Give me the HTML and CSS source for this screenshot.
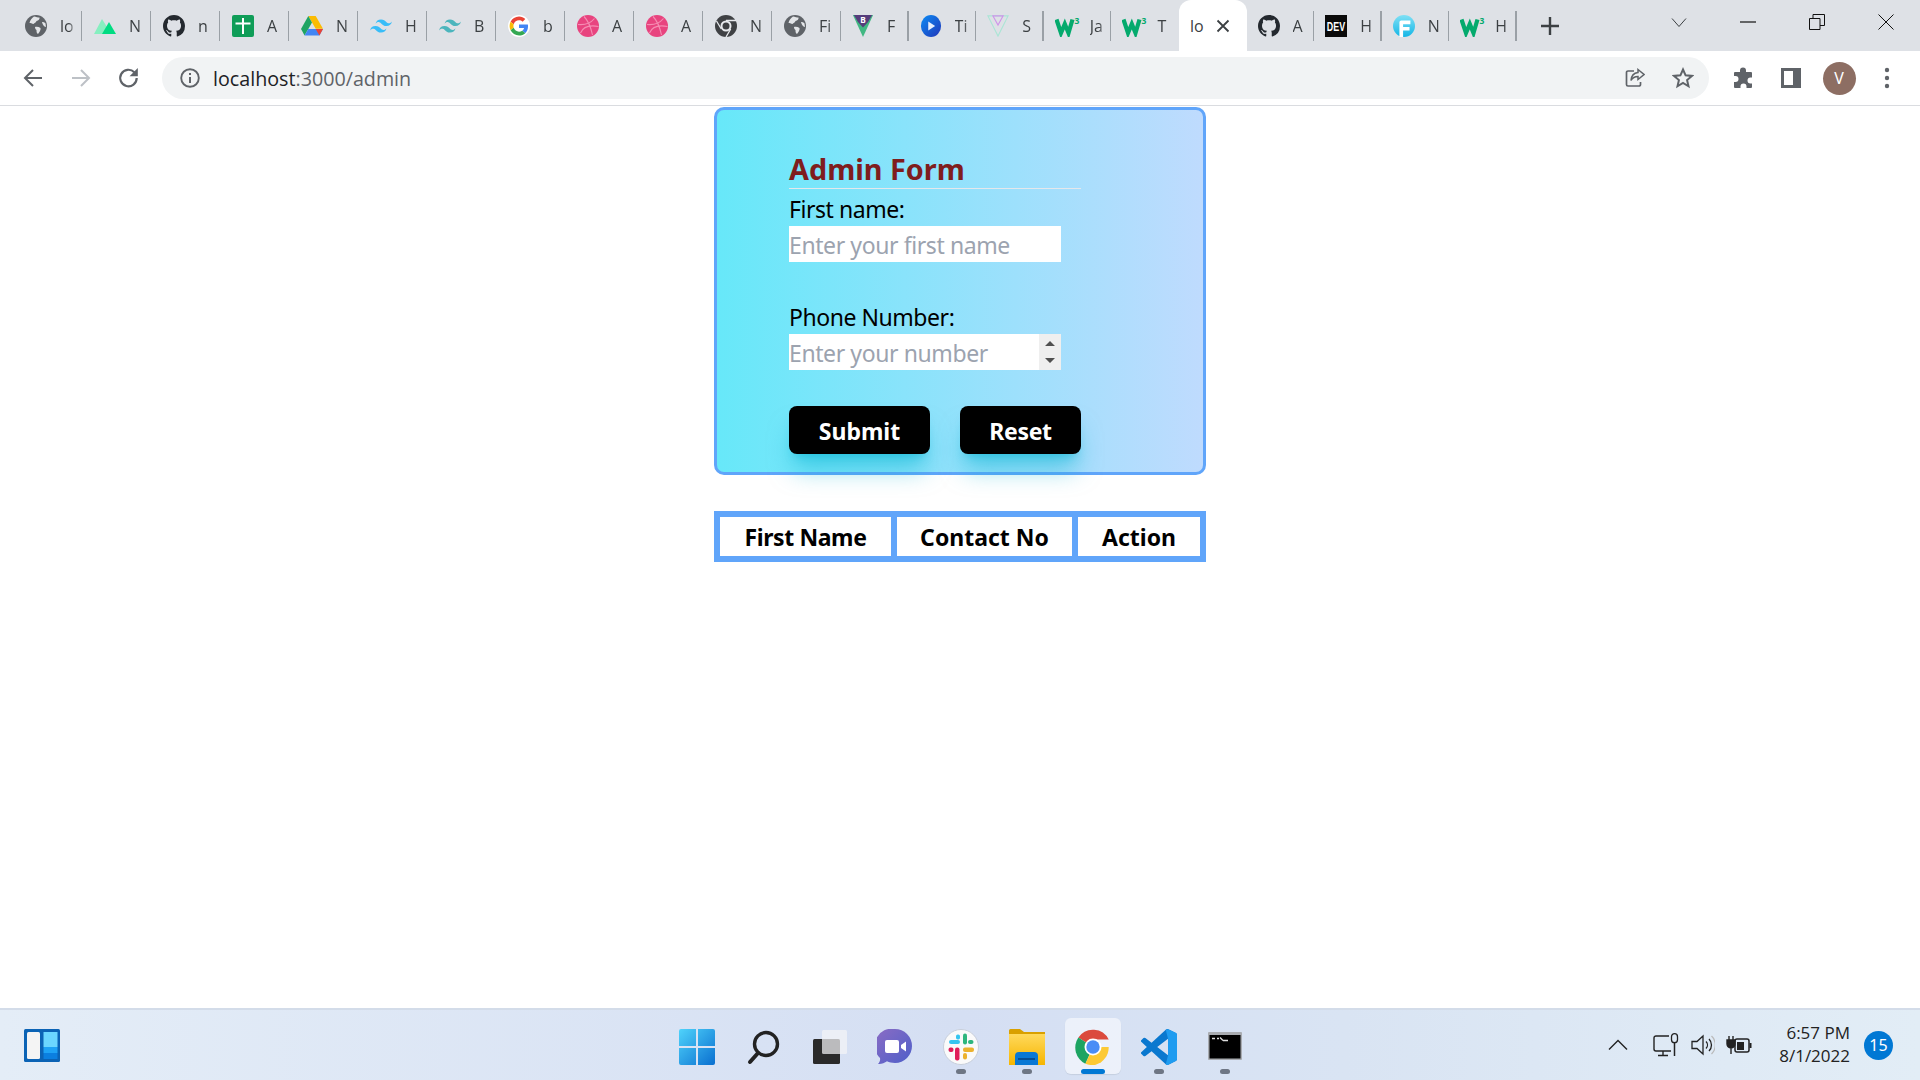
FILE: index.html
```html
<!DOCTYPE html>
<html lang="en">
<head>
<meta charset="utf-8">
<title>Admin Form</title>
<link rel="stylesheet" href="styles.css">
</head>
<body>
<svg class="defs" aria-hidden="true">
  <defs>
    <linearGradient id="gWin" x1="0" y1="0" x2="1" y2="1"><stop offset="0" stop-color="#4fd3fb"/><stop offset="1" stop-color="#0a6fd0"/></linearGradient>
    <linearGradient id="gFolder" x1="0" y1="0" x2="0" y2="1"><stop offset="0" stop-color="#ffd95c"/><stop offset="1" stop-color="#f6b500"/></linearGradient>
    <linearGradient id="gChat" x1="0" y1="0" x2="1" y2="1"><stop offset="0" stop-color="#8b6cc4"/><stop offset="1" stop-color="#4e5fc9"/></linearGradient>
    <linearGradient id="gF" x1="0" y1="0" x2="0" y2="1"><stop offset="0" stop-color="#7fe0f5"/><stop offset="1" stop-color="#14b6e6"/></linearGradient>
    <linearGradient id="gPlay" x1="0" y1="0" x2="1" y2="1"><stop offset="0" stop-color="#0b8cf5"/><stop offset="1" stop-color="#2236b8"/></linearGradient>
    <symbol id="globe" viewBox="0 0 22 22"><circle cx="11" cy="11" r="11" fill="#5f6368"/><path d="M9 1.500c2 .5 4 1 5.500 1 .5 1.500-1 3-3 3.500-.5 1.500-2 2-3 3-1.500-.5-3-1-4-1C5 5 7 3 9 1.500zM10 12c2-.5 4 0 5.500 1 .5 2-1 4-2.500 6-1.500-1-1.500-2.500-1.500-4-1-.5-1.500-1.800-1.500-3zM17 7c1.500 0 3 .5 3.500 1.500l.5 3.500c-2 0-3.500-3-4-5z" fill="#e3e5e8"/></symbol>
    <symbol id="nuxt" viewBox="0 0 22 22"><path d="M0 19 8 4l5 8-4 7z" fill="#86efc0"/><path d="M8 19 15 7l7 12z" fill="#00dc82"/></symbol>
    <symbol id="github" viewBox="0 0 16 16"><path fill="#24292f" d="M8 0C3.580 0 0 3.580 0 8c0 3.540 2.290 6.530 5.470 7.590.4.070.55-.17.55-.38 0-.19-.01-.82-.01-1.490-2.010.37-2.530-.49-2.690-.94-.09-.23-.48-.94-.82-1.130-.28-.15-.68-.52-.01-.53.63-.01 1.080.58 1.230.82.72 1.210 1.870.87 2.330.66.07-.52.28-.87.51-1.070-1.780-.2-3.640-.89-3.640-3.950 0-.87.31-1.590.82-2.150-.08-.2-.36-1.020.08-2.120 0 0 .67-.21 2.200.82.64-.18 1.320-.27 2-.27.68 0 1.360.09 2 .27 1.530-1.040 2.200-.82 2.200-.82.44 1.100.16 1.920.08 2.120.51.56.82 1.270.82 2.150 0 3.070-1.870 3.750-3.650 3.950.29.25.54.73.54 1.480 0 1.070-.01 1.930-.01 2.200 0 .21.15.46.55.38A8.013 8.013 0 0016 8c0-4.420-3.580-8-8-8z"/></symbol>
    <symbol id="sheets" viewBox="0 0 22 22"><rect width="22" height="22" rx="2" fill="#0f9d58"/><path d="M3.500 7.500h6.500V3h2v4.500h6.500v2H12V19h-2V9.500H3.500z" fill="#fff"/></symbol>
    <symbol id="drive" viewBox="0 0 22 20"><path d="M7.300 0h7.400l7.300 12.800h-7.300z" fill="#fbbc04"/><path d="M7.300 0 0 13l3.600 6.500 7.400-13z" fill="#1fa463"/><path d="M7.300 13H22l-3.600 6.500H3.600z" fill="#4285f4"/><path d="M14.700 13H22l-3.600 6.500z" fill="#ea4335"/></symbol>
    <symbol id="tw" viewBox="2 5 20 14"><path fill="#38bdf8" d="M12 6c-2.670 0-4.330 1.330-5 4 1-1.330 2.170-1.830 3.500-1.500.76.19 1.310.74 1.910 1.350.98 1 2.090 2.150 4.590 2.150 2.670 0 4.330-1.330 5-4-1 1.330-2.170 1.830-3.500 1.500-.76-.19-1.310-.74-1.910-1.350C15.610 7.150 14.500 6 12 6zM7 12c-2.670 0-4.330 1.330-5 4 1-1.330 2.170-1.830 3.500-1.500.76.19 1.310.74 1.910 1.350C8.390 16.850 9.500 18 12 18c2.670 0 4.330-1.330 5-4-1 1.330-2.170 1.830-3.500 1.500-.76-.19-1.310-.74-1.910-1.350C10.610 13.150 9.500 12 7 12z"/></symbol>
    <symbol id="tw2" viewBox="2 5 20 14"><path fill="#4bb5bd" d="M12 6c-2.670 0-4.330 1.330-5 4 1-1.330 2.170-1.830 3.500-1.500.76.19 1.310.74 1.910 1.350.98 1 2.090 2.150 4.590 2.150 2.670 0 4.330-1.330 5-4-1 1.330-2.170 1.830-3.500 1.500-.76-.19-1.310-.74-1.910-1.350C15.610 7.150 14.500 6 12 6zM7 12c-2.670 0-4.330 1.330-5 4 1-1.330 2.170-1.830 3.500-1.500.76.19 1.310.74 1.910 1.350C8.390 16.850 9.500 18 12 18c2.670 0 4.330-1.330 5-4-1 1.330-2.170 1.830-3.500 1.500-.76-.19-1.310-.74-1.910-1.350C10.610 13.150 9.500 12 7 12z"/></symbol>
    <symbol id="google" viewBox="-4 -4 56 56"><circle cx="24" cy="24" r="28" fill="#fff"/><path fill="#EA4335" d="M24 9.500c3.540 0 6.710 1.220 9.210 3.600l6.850-6.850C35.900 2.380 30.470 0 24 0 14.620 0 6.510 5.380 2.560 13.220l7.980 6.190C12.430 13.720 17.740 9.500 24 9.500z"/><path fill="#4285F4" d="M46.980 24.550c0-1.570-.15-3.090-.38-4.550H24v9.020h12.940c-.58 2.960-2.260 5.480-4.780 7.180l7.730 6c4.510-4.180 7.090-10.360 7.090-17.650z"/><path fill="#FBBC05" d="M10.530 28.590c-.48-1.450-.76-2.990-.76-4.590s.27-3.140.76-4.590l-7.980-6.190C.92 16.460 0 20.120 0 24c0 3.880.92 7.540 2.560 10.780l7.970-6.190z"/><path fill="#34A853" d="M24 48c6.480 0 11.930-2.130 15.890-5.810l-7.730-6c-2.150 1.450-4.920 2.300-8.160 2.300-6.260 0-11.570-4.220-13.470-9.910l-7.980 6.190C6.510 42.620 14.620 48 24 48z"/></symbol>
    <symbol id="dribbble" viewBox="0 0 22 22"><circle cx="11" cy="11" r="11" fill="#e8447f"/><path d="M7 1.500c3 3 6.500 9 8.500 18.500M1 9.500c5 .5 12-.5 16.500-6M3.500 18c2-5 7-8.500 18-6.500" fill="none" stroke="#f58db3" stroke-width="1.100"/></symbol>
    <symbol id="crdark" viewBox="0 0 22 22"><circle cx="11" cy="11" r="11" fill="#3f4144"/><circle cx="11" cy="11" r="5.500" fill="#e8eaed"/><circle cx="11" cy="11" r="3.500" fill="#3f4144"/><path d="M11 5.500h10M6.300 14 1.500 6M15.700 14 11 22" stroke="#e8eaed" stroke-width="1.300" fill="none"/></symbol>
    <symbol id="bvue" viewBox="0 0 22 24"><path d="M0 0h22L11 24z" fill="#41b883"/><path d="M4.500 0h13L11 12z" fill="#dde0e6"/><path d="M1 0h20l-4.500 7.500-5.500 6-5.500-6z" fill="#563d7c"/><text x="11" y="9" class="svg-b">B</text></symbol>
    <symbol id="play" viewBox="0 0 22 24"><ellipse cx="11" cy="12" rx="11" ry="12" fill="url(#gPlay)"/><path d="M8 7l7.500 5L8 17z" fill="#e6eefc"/></symbol>
    <symbol id="ghost" viewBox="0 0 24 24"><path d="M1 1h22L12 23z" fill="none" stroke="#aae5d5" stroke-width="1.200"/><path d="M6.500 1h11L12 11z" fill="none" stroke="#cf94ea" stroke-width="1.300"/></symbol>
    <symbol id="w3" viewBox="0 0 25 18"><path d="M1.500 2.500 6 16l3.800-9 3.700 9 4-13.500" fill="none" stroke="#04aa6d" stroke-width="4.200"/><text x="19.500" y="7" class="svg-3">3</text></symbol>
    <symbol id="dev" viewBox="0 0 24 24"><rect width="24" height="24" fill="#0a0a0a"/><text x="12" y="17" class="svg-dev" textLength="20" lengthAdjust="spacingAndGlyphs">DEV</text></symbol>
    <symbol id="fcirc" viewBox="0 0 24 24"><circle cx="12" cy="12" r="12" fill="url(#gF)"/><path d="M7 24V8a2 2 0 0 1 2-2h10v4h-8v3h7v4h-7v7z" fill="#fff"/></symbol>
  </defs>
</svg>

<header class="tabstrip">
  <div class="tab"><svg class="fav"><use href="#globe"/></svg><span class="tab-t">lo</span></div>
  <div class="tab"><svg class="fav"><use href="#nuxt"/></svg><span class="tab-t">N</span></div>
  <div class="tab"><svg class="fav"><use href="#github"/></svg><span class="tab-t">n</span></div>
  <div class="tab"><svg class="fav"><use href="#sheets"/></svg><span class="tab-t">A</span></div>
  <div class="tab"><svg class="fav"><use href="#drive"/></svg><span class="tab-t">N</span></div>
  <div class="tab"><svg class="fav"><use href="#tw"/></svg><span class="tab-t">H</span></div>
  <div class="tab"><svg class="fav"><use href="#tw2"/></svg><span class="tab-t">B</span></div>
  <div class="tab"><svg class="fav"><use href="#google"/></svg><span class="tab-t">b</span></div>
  <div class="tab"><svg class="fav"><use href="#dribbble"/></svg><span class="tab-t">A</span></div>
  <div class="tab"><svg class="fav"><use href="#dribbble"/></svg><span class="tab-t">A</span></div>
  <div class="tab"><svg class="fav"><use href="#crdark"/></svg><span class="tab-t">N</span></div>
  <div class="tab"><svg class="fav"><use href="#globe"/></svg><span class="tab-t">Fi</span></div>
  <div class="tab tab-n"><svg class="fav"><use href="#bvue"/></svg><span class="tab-t">F</span></div>
  <div class="tab tab-n"><svg class="fav"><use href="#play"/></svg><span class="tab-t">Ti</span></div>
  <div class="tab tab-n"><svg class="fav"><use href="#ghost"/></svg><span class="tab-t">S</span></div>
  <div class="tab tab-n"><svg class="fav fav-w3"><use href="#w3"/></svg><span class="tab-t tab-t-w3">Ja</span></div>
  <div class="tab tab-n tab-nosep"><svg class="fav fav-w3"><use href="#w3"/></svg><span class="tab-t tab-t-w3">T</span></div>
  <div class="tab tab-n tab-active"><span class="tab-t tab-t-active">lo</span><svg class="tab-x" viewBox="0 0 14 14"><path d="M1.500 1.500l11 11M12.500 1.500l-11 11" stroke="#3c4043" stroke-width="1.800"/></svg></div>
  <div class="tab tab-n"><svg class="fav"><use href="#github"/></svg><span class="tab-t">A</span></div>
  <div class="tab tab-n"><svg class="fav"><use href="#dev"/></svg><span class="tab-t">H</span></div>
  <div class="tab tab-n"><svg class="fav"><use href="#fcirc"/></svg><span class="tab-t">N</span></div>
  <div class="tab tab-n"><svg class="fav fav-w3"><use href="#w3"/></svg><span class="tab-t tab-t-w3">H</span></div>
  <svg class="plus" viewBox="0 0 18 18"><path d="M9 0v18M0 9h18" stroke="#3c4043" stroke-width="2.400"/></svg>
  <div class="winctl">
    <div class="wbtn"><svg class="w16" viewBox="0 0 16 16"><path d="M1 4.500l7 8 7-8" fill="none" stroke="#3c4043" stroke-width="1"/></svg></div>
    <div class="wbtn"><svg class="w16" viewBox="0 0 16 16"><path d="M0 8h16" stroke="#111" stroke-width="1.200"/></svg></div>
    <div class="wbtn"><svg class="w16" viewBox="0 0 16 16"><path d="M.5 4.500h10.500v11H.5zM4 4.500V.5h11.500v11H11" fill="none" stroke="#111" stroke-width="1"/></svg></div>
    <div class="wbtn"><svg class="w16" viewBox="0 0 16 16"><path d="M.5.500l15 15M15.500.500l-15 15" stroke="#111" stroke-width="1"/></svg></div>
  </div>
</header>

<nav class="toolbar">
  <div class="tbtn"><svg class="i20" viewBox="0 0 20 20"><path d="M19 10H2.500M10 2l-8 8 8 8" fill="none" stroke="#5f6368" stroke-width="2"/></svg></div>
  <div class="tbtn"><svg class="i20" viewBox="0 0 20 20"><path d="M1 10h16.500M10 2l8 8-8 8" fill="none" stroke="#bdc1c6" stroke-width="2"/></svg></div>
  <div class="tbtn"><svg class="i22" viewBox="0 0 20 20"><path d="M17 10a7.500 7.500 0 1 1-2.200-5.300" fill="none" stroke="#5f6368" stroke-width="2"/><path d="M18 1v7.500h-7.500z" fill="#5f6368"/></svg></div>
  <div class="omni">
    <svg class="info" viewBox="0 0 20 20"><circle cx="10" cy="10" r="8.800" fill="none" stroke="#5f6368" stroke-width="1.900"/><path d="M9 9h2v6H9zM9 5h2v2H9z" fill="#5f6368"/></svg>
    <span class="url"><span class="url-host">localhost</span>:3000/admin</span>
    <div class="omni-acts">
      <div class="tbtn"><svg class="i20" viewBox="0 0 20 20"><path d="M9 3H3a1.500 1.500 0 0 0-1.500 1.500v12A1.500 1.500 0 0 0 3 18h11a1.500 1.500 0 0 0 1.500-1.500V14" fill="none" stroke="#5f6368" stroke-width="1.700"/><path d="M13 1.500l6 5-6 5V8.500c-3.500 0-5.500 1.200-7 4 .3-4.500 2.800-7.500 7-8z" fill="none" stroke="#5f6368" stroke-width="1.500"/></svg></div>
      <div class="tbtn"><svg class="i22" viewBox="0 0 22 22"><path d="M11 2.500l2.600 5.800 6.300.6-4.800 4.200 1.400 6.200L11 16l-5.500 3.300 1.400-6.200L2.100 8.900l6.300-.6z" fill="none" stroke="#5f6368" stroke-width="2"/></svg></div>
    </div>
  </div>
  <div class="tool-acts">
    <div class="tbtn"><svg class="i22" viewBox="0 0 22 22"><path d="M8 3.500a3 3 0 0 1 6 0V5h5a1 1 0 0 1 1 1v4.500h-1.500a3 3 0 0 0 0 6H20V20a1 1 0 0 1-1 1h-4.500v-1.500a3 3 0 0 0-6 0V21H3a1 1 0 0 1-1-1v-5h1.500a3 3 0 0 0 0-6H2V6a1 1 0 0 1 1-1h5z" fill="#5f6368"/></svg></div>
    <div class="tbtn"><svg class="i22" viewBox="0 0 22 22"><path d="M1 1h20v20H1zM4 4v14h9V4z" fill="#5f6368" fill-rule="evenodd"/></svg></div>
    <div class="tbtn"><span class="avatar">V</span></div>
    <div class="tbtn"><svg class="dots" viewBox="0 0 6 22"><circle cx="3" cy="3" r="2.200" fill="#5f6368"/><circle cx="3" cy="11" r="2.200" fill="#5f6368"/><circle cx="3" cy="19" r="2.200" fill="#5f6368"/></svg></div>
  </div>
</nav>

<main class="page">
  <form class="card">
    <h2 class="card-title">Admin Form</h2>
    <label class="lbl" for="fn">First name:</label>
    <div class="field"><input class="inp" id="fn" type="text" placeholder="Enter your first name"></div>
    <label class="lbl lbl-gap" for="pn">Phone Number:</label>
    <div class="field">
      <input class="inp" id="pn" type="text" placeholder="Enter your number">
      <span class="spin"><svg class="spin-i" viewBox="0 0 10 24"><path d="M0 6l5-5 5 5zM0 18l5 5 5-5z" fill="#505050"/></svg></span>
    </div>
    <div class="actions">
      <button class="btn btn-submit" type="button">Submit</button>
      <button class="btn btn-reset" type="button">Reset</button>
    </div>
  </form>
  <table class="tbl">
    <thead><tr><th class="c1">First Name</th><th class="c2">Contact No</th><th class="c3">Action</th></tr></thead>
  </table>
</main>

<footer class="taskbar">
  <div class="tb-left">
    <svg class="widgets" viewBox="0 0 36 33"><rect width="36" height="33" rx="1.500" fill="#0b63b5"/><rect x="3" y="3" width="13" height="27" rx="1.500" fill="#f4f4f4"/><rect x="19.500" y="3" width="14" height="15" fill="#6bd6ff"/><rect x="19.500" y="18" width="14" height="6" fill="#1ea2f5"/><rect x="19.500" y="24" width="14" height="6" fill="#0b7fe0"/></svg>
  </div>
  <div class="tb-center">
    <div class="tb"><svg class="tbi" viewBox="0 0 36 36"><path d="M0 2a2 2 0 0 1 2-2h15v17H0zM19 0h15a2 2 0 0 1 2 2v15H19zM0 19h17v17H2a2 2 0 0 1-2-2zM19 19h17v15a2 2 0 0 1-2 2H19z" fill="url(#gWin)"/></svg></div>
    <div class="tb"><svg class="tbi" viewBox="0 0 36 36"><circle cx="21" cy="15" r="11.500" fill="none" stroke="#222" stroke-width="3.400"/><path d="M13 24l-8 9" stroke="#222" stroke-width="4" stroke-linecap="round"/></svg></div>
    <div class="tb"><svg class="tbi" viewBox="0 0 36 36"><rect x="2" y="10" width="27" height="25" rx="1.500" fill="#2a2a2a"/><rect x="11" y="1" width="25" height="24" rx="1.500" fill="#f4f4f6" opacity=".72"/></svg></div>
    <div class="tb"><svg class="tbi" viewBox="0 0 36 36"><path d="M18 0a17 17 0 0 1 0 34c-3 0-6-.6-8-1.700C7.500 34 4 35.500 1 35c1.500-1.500 2.500-3.500 2-6A17 17 0 0 1 18 0z" fill="url(#gChat)"/><rect x="8" y="11" width="14" height="13" rx="2" fill="#fff"/><path d="M24 16l5-3.500v10L24 19z" fill="#fff"/></svg></div>
    <div class="tb"><svg class="tbi" viewBox="0 0 36 36"><circle cx="18" cy="18" r="17.500" fill="#fafafa" stroke="#c8cfdb" stroke-width="1"/><rect x="6" y="11" width="11" height="4" rx="2" fill="#36c5f0"/><rect x="13" y="5.500" width="4" height="5" rx="1.700" fill="#36c5f0"/><rect x="20" y="4.500" width="4" height="11" rx="2" fill="#2eb67d"/><rect x="25" y="11" width="5.500" height="4" rx="2" fill="#2eb67d"/><rect x="20" y="18.500" width="11" height="4.500" rx="2" fill="#ecb22e"/><rect x="20" y="24" width="4" height="6.500" rx="2" fill="#ecb22e"/><rect x="12" y="18.500" width="4.500" height="13" rx="2" fill="#e01e5a"/><rect x="5.500" y="18.500" width="5" height="4.500" rx="2" fill="#e01e5a"/></svg><i class="tb-dot"></i></div>
    <div class="tb"><svg class="tbi" viewBox="0 0 36 36"><path d="M0 1.500A1.500 1.500 0 0 1 1.500 0H11l4 3h21v5H0z" fill="#d9a000"/><path d="M0 5h36v31H0z" fill="url(#gFolder)"/><path d="M6 36V27a4 4 0 0 1 4-4h15a4 4 0 0 1 4 4v9z" fill="#0a78d4"/><rect x="9" y="29" width="17" height="2" fill="#064e93"/></svg><i class="tb-dot"></i></div>
    <div class="tb tb-active"><svg class="tbi" viewBox="0 0 36 36"><path d="M18 18 3.400 8.500A17.500 17.500 0 0 1 33.700 10.500H18z" fill="#db4a3d"/><path d="M18 18l-7.600 16.800A18 18 0 0 1 3.400 8.500z" fill="#1da462"/><path d="M18 18h15.700a18 18 0 0 1-13 17.700 18 18 0 0 1-10.300-.9z" fill="#fcc934"/><circle cx="18" cy="18" r="8.500" fill="#fff"/><circle cx="18" cy="18" r="6.700" fill="#4a8df6"/></svg><i class="tb-bar"></i></div>
    <div class="tb"><svg class="tbi" viewBox="0 0 24 24"><path d="M23.150 2.587L18.210.21a1.494 1.494 0 0 0-1.705.29l-9.460 8.630-4.120-3.128a.999.999 0 0 0-1.276.057L.327 7.261A1 1 0 0 0 .326 8.740L3.899 12 .326 15.260a1 1 0 0 0 .001 1.479L1.650 17.940a.999.999 0 0 0 1.276.057l4.120-3.128 9.460 8.630a1.492 1.492 0 0 0 1.704.29l4.942-2.377A1.500 1.500 0 0 0 24 20.060V3.939a1.500 1.500 0 0 0-.85-1.352zm-5.146 14.861L10.826 12l7.178-5.448v10.896z" fill="#0a78cf"/><path d="M16.500.5 18.200.2l4.950 2.380A1.500 1.500 0 0 1 24 3.940v16.120a1.500 1.500 0 0 1-.85 1.350l-4.940 2.380a1.500 1.500 0 0 1-1.700-.29l1.500-6.050V6.550z" fill="#1f9cf0"/></svg><i class="tb-dot"></i></div>
    <div class="tb"><svg class="tbi" viewBox="0 0 36 36"><rect x="1" y="3" width="34" height="28" rx="1" fill="#a9acb1"/><rect x="2.500" y="6" width="31" height="23.500" fill="#000"/><path d="M5 9.500h3M10 9.500h2M13 8.500l3 3M16 11.500h5" stroke="#ddd" stroke-width="1.300" fill="none"/></svg><i class="tb-dot"></i></div>
  </div>
  <div class="tb-right">
    <svg class="tray-chev" viewBox="0 0 20 12"><path d="M1 10.500l9-9 9 9" fill="none" stroke="#222" stroke-width="1.400"/></svg>
    <svg class="tray-net" viewBox="0 0 26 24"><path d="M16 3H3a2 2 0 0 0-2 2v11a2 2 0 0 0 2 2h15M5 22.500h10M10 18v4" fill="none" stroke="#222" stroke-width="1.400"/><rect x="18.500" y=".7" width="6" height="9" rx="3" fill="none" stroke="#222" stroke-width="1.300"/><path d="M21.500 10v13" stroke="#222" stroke-width="1.500"/></svg>
    <svg class="tray-vol" viewBox="0 0 24 22"><path d="M1 7.500h5L12 2v18l-6-5.500H1z" fill="none" stroke="#222" stroke-width="1.300"/><path d="M15 7.500a5 5 0 0 1 0 7M18 5a8.500 8.500 0 0 1 0 12" fill="none" stroke="#222" stroke-width="1.300"/><path d="M20.500 2a12.500 12.500 0 0 1 0 18" fill="none" stroke="#bbb" stroke-width="1.300"/></svg>
    <svg class="tray-bat" viewBox="0 0 26 18"><path d="M3 0v5M7 0v5M1 4h8v4a4 4 0 0 1-8 0zM5 11v7" fill="#222" stroke="#222" stroke-width="1.400"/><rect x="9" y="3" width="14" height="13" rx="2" fill="none" stroke="#222" stroke-width="1.500"/><path d="M11 6h7v8h-7z" fill="#222"/><rect x="23.500" y="7" width="2" height="5" fill="#222"/></svg>
    <div class="clock"><span>6:57 PM</span><span>8/1/2022</span></div>
    <span class="badge">15</span>
  </div>
</footer>
</body>
</html>
```
FILE: styles.css
```css
* { box-sizing: border-box; }
html, body { margin: 0; padding: 0; height: 100%; }
body {
  display: flex;
  flex-direction: column;
  height: 1080px;
  width: 1920px;
  overflow: hidden;
  background: #fff;
  font-family: "Noto Sans", "Open Sans", sans-serif;
  color: #000;
}
.defs { position: absolute; width: 0; height: 0; }

/* tab strip */
.tabstrip {
  display: flex;
  align-items: stretch;
  height: 51px;
  flex: none;
  padding-left: 13px;
  background: #dee1e6;
}
.tab {
  position: relative;
  display: flex;
  align-items: center;
  width: 69px;
  flex: none;
  padding-left: 12px;
  overflow: hidden;
}
.tab-n { width: 67.6px; padding-left: 11px; }
.tab::after {
  content: "";
  position: absolute;
  right: 0;
  top: 11px;
  height: 30px;
  width: 1.5px;
  background: #9aa0a6;
}
.tab-nosep::after, .tab-active::after { display: none; }
.tab-active {
  background: #fff;
  border-radius: 12px 12px 0 0;
  padding-left: 11px;
}
.fav { width: 22px; height: 22px; flex: none; }
.fav-w3 { width: 25px; }
.tab-t {
  margin-left: 13px;
  font-size: 16px;
  color: #3c4043;
  white-space: nowrap;
  font-family: "Open Sans", sans-serif;
  width: 17px;
  flex: none;
  -webkit-mask-image: linear-gradient(to right, #000 55%, transparent 90%);
  mask-image: linear-gradient(to right, #000 55%, transparent 90%);
}
.tab-t-w3 { margin-left: 10px; }
.tab-t-active { margin-left: 0; width: 17px; -webkit-mask-image: none; mask-image: none; }
.tab-x { width: 14px; height: 14px; margin-left: 9px; flex: none; }
.plus { width: 18px; height: 18px; flex: none; align-self: center; margin-left: 24px; }
.winctl { display: flex; margin-left: auto; }
.wbtn { width: 69px; display: flex; justify-content: center; padding-top: 14px; }
.w16 { width: 16px; height: 16px; }

/* toolbar */
.toolbar {
  display: flex;
  align-items: center;
  height: 55px;
  flex: none;
  padding: 0 9px;
  background: #fff;
  border-bottom: 1px solid #dadce0;
}
.tbtn { width: 48px; height: 42px; flex: none; display: flex; align-items: center; justify-content: center; }
.i20 { width: 20px; height: 20px; }
.i22 { width: 22px; height: 22px; }
.dots { width: 6px; height: 22px; }
.omni {
  display: flex;
  align-items: center;
  width: 1547px;
  height: 42px;
  margin-left: 9px;
  padding: 0 2px 0 18px;
  border-radius: 21px;
  background: #f1f3f4;
}
.info { width: 20px; height: 20px; flex: none; }
.url { margin-left: 13px; font-size: 19.7px; color: #5f6368; font-family: "Open Sans", sans-serif; white-space: nowrap; }
.url-host { color: #202124; }
.omni-acts { display: flex; margin-left: auto; }
.tool-acts { display: flex; margin-left: 10px; }
.avatar {
  width: 33px;
  height: 33px;
  border-radius: 50%;
  background: #8d6e63;
  color: #fff;
  font-size: 16px;
  display: flex;
  align-items: center;
  justify-content: center;
}

/* page */
.page { flex: 1; display: flex; flex-direction: column; align-items: center; padding-top: 1px; }
.card {
  width: 492px;
  height: 368px;
  padding: 40px 0 0 72px;
  border: 3px solid #60a5fa;
  border-radius: 10px;
  background: linear-gradient(to right, #67e8f9, #bfdbfe);
}
.card-title {
  width: 292px;
  margin: 0;
  height: 39px;
  line-height: 38px;
  font-size: 28.8px;
  font-weight: 700;
  color: #7f1d1d;
  border-bottom: 1px solid #e5e7eb;
}
.lbl { display: block; height: 37px; line-height: 40px; font-size: 23px; letter-spacing: -.45px; width: 272px; }
.lbl-gap { margin-top: 35px; }
.field { display: flex; width: 272px; height: 36px; background: #fff; }
.inp {
  flex: 1;
  min-width: 0;
  border: 0;
  outline: 0;
  padding: 2px 0 0 0;
  background: transparent;
  font: inherit;
  font-size: 23px;
  letter-spacing: -.4px;
  color: #000;
}
.inp::placeholder { color: #9ca3af; opacity: 1; }
.spin { width: 22px; background: #efefef; display: flex; align-items: center; justify-content: center; }
.spin-i { width: 10px; height: 24px; }
.actions { display: flex; gap: 30px; margin-top: 36px; }
.btn {
  height: 48px;
  border: 0;
  padding: 2px 0 0;
  border-radius: 8px;
  background: #000;
  color: #fff;
  font: inherit;
  font-weight: 700;
  font-size: 23px;
  box-shadow: 0 20px 25px -5px rgba(6, 182, 212, .5), 0 8px 10px -6px rgba(6, 182, 212, .5);
}
.btn-submit { width: 141px; }
.btn-reset { width: 121px; letter-spacing: -.3px; }

.tbl {
  margin-top: 36px;
  width: 492px;
  table-layout: fixed;
  border-collapse: separate;
  border-spacing: 6px;
  background: #60a5fa;
}
.tbl th { height: 39px; padding: 0; background: #fff; font-size: 23px; font-weight: 700; }
.c1 { width: 171px; letter-spacing: -.4px; }
.c2 { width: 175px; }
.c3 { width: 122px; }

/* taskbar */
.taskbar {
  height: 72px;
  flex: none;
  display: grid;
  grid-template-columns: 1fr 597px 1fr;
  padding-top: 8px;
  border-top: 2px solid #d3dce9;
  background: linear-gradient(to right, #e4edf7 0%, #d5dff3 50%, #d9e4f3 70%, #e2edf6 100%);
}
.tb-left { padding: 11px 0 0 24px; }
.widgets { width: 36px; height: 33px; display: block; }
.tb-center { display: flex; padding-left: 2px; }
.tb {
  position: relative;
  width: 56px;
  height: 56px;
  margin: 0 5.05px;
  flex: none;
  display: flex;
  justify-content: center;
  padding-top: 11px;
  border-radius: 6px;
}
.tb-active { background: rgba(255, 255, 255, .55); box-shadow: 0 1px 1px rgba(0, 0, 0, .08); }
.tbi { width: 36px; height: 36px; }
.tb-dot {
  position: absolute;
  left: 23px;
  bottom: 0;
  width: 10px;
  height: 5px;
  border-radius: 3px;
  background: #6e7684;
}
.tb-bar {
  position: absolute;
  left: 16px;
  bottom: 0;
  width: 24px;
  height: 5px;
  border-radius: 3px;
  background: #0078d4;
}
.tb-right { display: flex; align-items: center; padding-bottom: 8px; }
.tray-chev { width: 20px; height: 12px; margin-left: 349.5px; flex: none; }
.tray-net { width: 26px; height: 24px; margin-left: 25px; flex: none; }
.tray-vol { width: 24px; height: 22px; margin-left: 12px; flex: none; }
.tray-bat { width: 26px; height: 18px; margin-left: 11px; flex: none; }
.clock {
  display: flex;
  flex-direction: column;
  align-items: flex-end;
  width: 90px;
  margin-left: 8px;
  margin-top: -2px;
  font-size: 17px;
  line-height: 23px;
  color: #222;
  font-family: "Open Sans", sans-serif;
  flex: none;
}
.badge {
  width: 29px;
  height: 29px;
  margin-left: 14px;
  border-radius: 50%;
  background: #0078d4;
  color: #fff;
  font-size: 16px;
  display: flex;
  align-items: center;
  justify-content: center;
  flex: none;
}
.svg-b { font: 700 9px "Noto Sans", sans-serif; fill: #fff; text-anchor: middle; }
.svg-3 { font: 700 8.500px "Noto Sans", sans-serif; fill: #04aa6d; }
.svg-dev { font: 700 13px "Liberation Sans", sans-serif; fill: #fff; text-anchor: middle; }
```
